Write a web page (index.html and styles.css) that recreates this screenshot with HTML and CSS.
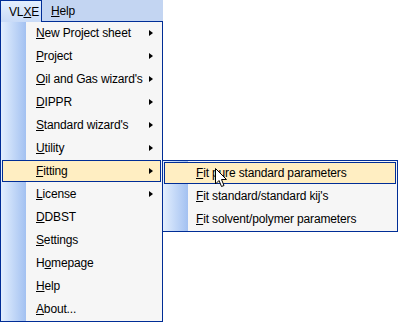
FILE: index.html
```html
<!DOCTYPE html>
<html lang="en">
<head>
  <meta charset="UTF-8" />
  <title>VLXE Menu</title>
  <link rel="stylesheet" href="styles.css">
</head>
<body>

  <div class="menubar">
    <div class="top-item open"><span>VL<u>X</u>E</span></div>
    <div class="top-item"><span><u>H</u>elp</span></div>
  </div>

  <div class="dropdown">
    <div class="item sub"><span><u>N</u>ew Project sheet</span><i class="arrow"></i></div>
    <div class="item sub"><span><u>P</u>roject</span><i class="arrow"></i></div>
    <div class="item sub"><span><u>O</u>il and Gas wizard's</span><i class="arrow"></i></div>
    <div class="item sub"><span><u>D</u>IPPR</span><i class="arrow"></i></div>
    <div class="item sub"><span><u>S</u>tandard wizard's</span><i class="arrow"></i></div>
    <div class="item sub"><span><u>U</u>tility</span><i class="arrow"></i></div>
    <div class="item sub active"><span><u>F</u>itting</span><i class="arrow"></i>
      <div class="submenu">
        <div class="item active"><span><u>F</u>it pure standard parameters</span></div>
        <div class="item"><span><u>F</u>it standard/standard kij's</span></div>
        <div class="item"><span><u>F</u>it solvent/polymer parameters</span></div>
        <svg class="cursor" width="13" height="20" viewBox="0 0 13 20">
          <path d="M0.5 0.5 L0.5 16 L4 12.5 L6.5 18.5 L9 17.5 L6.5 11.5 L11.5 11.5 Z" fill="#fff" stroke="#000" stroke-width="1"/>
        </svg>
      </div>
    </div>
    <div class="item sub"><span><u>L</u>icense</span><i class="arrow"></i></div>
    <div class="item"><span><u>D</u>DBST</span></div>
    <div class="item"><span><u>S</u>ettings</span></div>
    <div class="item"><span>H<u>o</u>mepage</span></div>
    <div class="item"><span><u>H</u>elp</span></div>
    <div class="item"><span><u>A</u>bout...</span></div>
  </div>

</body>
</html>
```

FILE: styles.css
```css
body {
  margin: 0;
  background: #fff;
  font-family: 'Liberation Sans', Arial, sans-serif;
  font-size: 12px;
  letter-spacing: -0.15px;
  color: #000;
}
u {
  text-decoration: underline;
  text-underline-offset: 1px;
}
.menubar {
  display: flex;
  width: 163px;
  height: 21px;
  background-color: #c3d5f2;
}
.top-item {
  height: 21px;
  padding: 0 8px 0 8px;
  display: flex;
  align-items: center;
  border: 1px solid transparent;
  border-bottom: none;
  box-sizing: border-box;
}
.top-item.open {
  width: 42px;
  border-color: #002d96;
  background: linear-gradient(to bottom, #e3effe, #c9dbf7);
  position: relative;
  z-index: 2;
  margin-bottom: -1px;
  height: 22px;
}
.dropdown {
  width: 163px;
  box-sizing: border-box;
  border: 1px solid #002d96;
  background: linear-gradient(to right, #e3effe 0px, #a3c1f1 25px, #f6f6f6 25px);
  position: relative;
}
.item {
  position: relative;
  height: 22px;
  margin: 0 1px 1px 1px;
  padding-left: 33px;
  display: flex;
  align-items: center;
  border: 1px solid transparent;
  box-sizing: border-box;
}
.item.active {
  background-color: #ffeec2;
  border-color: #002d96;
}
.arrow {
  position: absolute;
  right: 7px;
  top: 7px;
  width: 0;
  height: 0;
  border-top: 3.5px solid transparent;
  border-bottom: 3.5px solid transparent;
  border-left: 4px solid #000;
}
.submenu {
  position: absolute;
  left: 159px;
  top: -1px;
  width: 236px;
  box-sizing: border-box;
  border: 1px solid #002d96;
  padding-top: 1px;
  background: linear-gradient(to right, #e3effe 0px, #a3c1f1 25px, #f6f6f6 25px);
}
.submenu .item {
  padding-left: 31px;
}
.cursor {
  position: absolute;
  left: 52px;
  top: 7px;
}
```
